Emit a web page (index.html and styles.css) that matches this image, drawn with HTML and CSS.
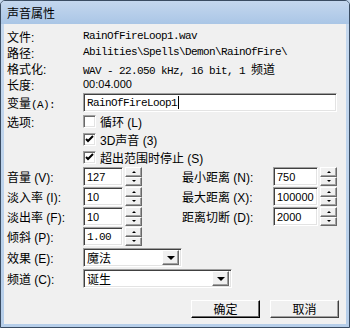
FILE: index.html
```html
<!DOCTYPE html>
<html lang="zh-CN">
<head>
    <meta charset="UTF-8">
    <title>声音属性</title>
    <link rel="stylesheet" href="styles.css">
</head>
<body>
    <div class="window">
        <div class="titlebar">声音属性</div>
        <div class="client">
            <div class="info">
                <span class="label">文件:</span>
                <span class="mono">RainOfFireLoop1.wav</span>
            </div>
            <div class="info">
                <span class="label">路径:</span>
                <span class="mono">Abilities\Spells\Demon\RainOfFire\</span>
            </div>
            <div class="info">
                <span class="label">格式化:</span>
                <span class="mono">WAV - 22.050 kHz, 16 bit, 1 <span class="cjk">频道</span></span>
            </div>
            <div class="info">
                <span class="label">长度:</span>
                <span class="num">00:04.000</span>
            </div>

            <div class="row var-row">
                <span class="label">变量<span class="mono">(A):</span></span>
                <div class="field wide"><span class="mono">RainOfFireLoop1</span><span class="caret"></span></div>
            </div>

            <div class="options">
                <div class="opt">
                    <span class="label">选项:</span>
                    <span class="check"></span>
                    <span class="opt-text">循环 (L)</span>
                </div>
                <div class="opt">
                    <span class="label"></span>
                    <span class="check on"><svg width="9" height="9" viewBox="0 0 9 9"><path d="M1 4 L3 6 L8 1" fill="none" stroke="#000" stroke-width="2"/></svg></span>
                    <span class="opt-text">3D声音 (3)</span>
                </div>
                <div class="opt">
                    <span class="label"></span>
                    <span class="check on"><svg width="9" height="9" viewBox="0 0 9 9"><path d="M1 4 L3 6 L8 1" fill="none" stroke="#000" stroke-width="2"/></svg></span>
                    <span class="opt-text">超出范围时停止 (S)</span>
                </div>
            </div>

            <div class="numbers">
                <div class="col left">
                    <div class="row">
                        <span class="label">音量 (V):</span>
                        <div class="field num-field"><span class="num">127</span></div>
                        <div class="spin"><span class="up"></span><span class="down"></span></div>
                    </div>
                    <div class="row">
                        <span class="label">淡入率 (I):</span>
                        <div class="field num-field"><span class="num">10</span></div>
                        <div class="spin"><span class="up"></span><span class="down"></span></div>
                    </div>
                    <div class="row">
                        <span class="label">淡出率 (F):</span>
                        <div class="field num-field"><span class="num">10</span></div>
                        <div class="spin"><span class="up"></span><span class="down"></span></div>
                    </div>
                    <div class="row">
                        <span class="label">倾斜 (P):</span>
                        <div class="field num-field"><span class="mono">1.00</span></div>
                        <div class="spin"><span class="up"></span><span class="down"></span></div>
                    </div>
                </div>
                <div class="col right">
                    <div class="row">
                        <span class="label">最小距离 (N):</span>
                        <div class="field num-field"><span class="num">750</span></div>
                        <div class="spin"><span class="up"></span><span class="down"></span></div>
                    </div>
                    <div class="row">
                        <span class="label">最大距离 (X):</span>
                        <div class="field num-field"><span class="num">100000</span></div>
                        <div class="spin"><span class="up"></span><span class="down"></span></div>
                    </div>
                    <div class="row">
                        <span class="label">距离切断 (D):</span>
                        <div class="field num-field"><span class="num">2000</span></div>
                        <div class="spin"><span class="up"></span><span class="down"></span></div>
                    </div>
                </div>
            </div>

            <div class="row combo-row">
                <span class="label">效果 (E):</span>
                <div class="field combo effect"><span class="combo-text">魔法</span><span class="drop"></span></div>
            </div>
            <div class="row combo-row">
                <span class="label">频道 (C):</span>
                <div class="field combo channel"><span class="combo-text">诞生</span><span class="drop"></span></div>
            </div>

            <div class="buttons">
                <button class="btn default">确定</button>
                <button class="btn">取消</button>
            </div>
        </div>
    </div>
</body>
</html>
```

FILE: styles.css
```css
html, body {
    margin: 0;
    padding: 0;
}
body {
    font-family: "Liberation Sans", "Noto Sans CJK SC", sans-serif;
    font-size: 12px;
    color: #000;
    background: #c4d8ee;
}
.window {
    width: 350px;
    height: 328px;
    box-sizing: border-box;
    border: 1px solid #3a4c62;
    border-radius: 5px 5px 0 0;
    background: linear-gradient(#c6d9ef, #b6cee9);
    display: flex;
    flex-direction: column;
}
.titlebar {
    height: 23px;
    line-height: 23px;
    padding-left: 6px;
    font-family: "Noto Sans CJK SC", sans-serif;
    font-size: 12px;
    background: linear-gradient(#c4d7ee, #aac6e6);
    border-radius: 4px 4px 0 0;
    flex: none;
}
.client {
    flex: 1;
    margin: 0 3px 3px 3px;
    background: #f0f0f0;
    padding: 4px 3px 0 3px;
    display: flex;
    flex-direction: column;
}
.label {
    width: 76px;
    flex: none;
    font-family: "Liberation Sans", "Noto Sans CJK SC", sans-serif;
    white-space: nowrap;
}
.mono {
    font-family: "Liberation Mono", monospace;
    font-size: 11px;
    letter-spacing: -0.6px;
}
.cjk {
    font-family: "Noto Sans CJK SC", sans-serif;
    font-size: 12px;
    letter-spacing: 0;
}
.num {
    font-family: "Liberation Sans", sans-serif;
    font-size: 11px;
}
.info {
    display: flex;
    align-items: center;
    height: 16px;
    white-space: nowrap;
}
.row {
    display: flex;
    align-items: center;
    height: 19px;
}
.var-row {
    margin-top: 1px;
}
.field {
    box-sizing: border-box;
    height: 19px;
    background: #fff;
    border: 1px solid;
    border-color: #a0a0a0 #fff #fff #a0a0a0;
    box-shadow: inset 1px 1px #404040, inset -1px -1px #e3e3e3;
    display: flex;
    align-items: center;
    padding-left: 3px;
    white-space: nowrap;
}
.wide {
    width: 254px;
}
.caret {
    width: 1px;
    height: 13px;
    background: #000;
    margin-left: 1px;
}
.options {
    display: flex;
    flex-direction: column;
}
.opt {
    display: flex;
    align-items: center;
    height: 18px;
}
.check {
    box-sizing: border-box;
    width: 13px;
    height: 13px;
    background: #fff;
    border: 1px solid;
    border-color: #a0a0a0 #fff #fff #a0a0a0;
    box-shadow: inset 1px 1px #696969, inset -1px -1px #e3e3e3;
    display: flex;
    align-items: center;
    justify-content: center;
    margin-right: 4px;
}
.opt-text {
    font-family: "Liberation Sans", "Noto Sans CJK SC", sans-serif;
}
.numbers {
    display: flex;
    margin-top: 1px;
}
.col {
    display: flex;
    flex-direction: column;
    gap: 1px;
}
.col.right {
    margin-left: 40px;
}
.col.right .label {
    width: 91px;
}
.num-field {
    width: 40px;
}
.col.right .num-field {
    width: 45px;
}
.spin {
    width: 17px;
    height: 19px;
    margin-left: 2px;
    display: flex;
    flex-direction: column;
}
.spin span {
    flex: 1;
    box-sizing: border-box;
    background: #f0f0f0;
    border: 1px solid;
    border-color: #fff #696969 #696969 #fff;
    box-shadow: inset -1px -1px #a0a0a0;
    display: flex;
    align-items: center;
    justify-content: center;
}
.spin span::after {
    content: "";
    width: 0;
    height: 0;
    border-left: 2px solid transparent;
    border-right: 2px solid transparent;
}
.spin .up::after {
    border-bottom: 2px solid #000;
}
.spin .down::after {
    border-top: 2px solid #000;
}
.combo-row {
    margin-top: 2px;
}
.combo {
    padding-right: 1px;
    justify-content: space-between;
}
.effect {
    width: 99px;
}
.channel {
    width: 149px;
}
.combo-text {
    font-family: "Noto Sans CJK SC", sans-serif;
}
.drop {
    box-sizing: border-box;
    width: 17px;
    height: 15px;
    margin-right: 1px;
    background: #f0f0f0;
    border: 1px solid;
    border-color: #fff #696969 #696969 #fff;
    box-shadow: inset -1px -1px #a0a0a0;
    display: flex;
    align-items: center;
    justify-content: center;
}
.drop::after {
    content: "";
    border-left: 4px solid transparent;
    border-right: 4px solid transparent;
    border-top: 4px solid #000;
    margin-top: 1px;
}
.buttons {
    display: flex;
    justify-content: flex-end;
    gap: 10px;
    margin-top: 12px;
    padding-right: 4px;
}
.btn {
    box-sizing: border-box;
    width: 69px;
    height: 18px;
    padding: 0;
    font-family: "Noto Sans CJK SC", sans-serif;
    font-size: 12px;
    line-height: 14px;
    background: #f0f0f0;
    border: 1px solid;
    border-color: #fff #404040 #404040 #fff;
    box-shadow: inset -1px -1px #a0a0a0;
    color: #000;
}
.btn.default {
    border-color: #fff #000 #000 #fff;
    box-shadow: inset -1px -1px #696969;
}
```
